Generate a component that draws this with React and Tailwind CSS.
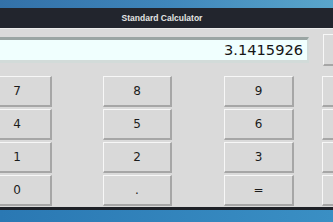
const rows = [
  ["7", "8", "9", ""],
  ["4", "5", "6", ""],
  ["1", "2", "3", ""],
  ["0", ".", "=", ""],
];

function Key({ label, className }) {
  return (
    <button
      className={
        "h-[31px] shrink-0 bg-[#d9d9d9] border-t border-l border-t-[#f7f7f7] border-l-[#f7f7f7] border-b-2 border-r-2 border-b-[#a6a6a6] border-r-[#a6a6a6] text-[12px] text-[#1c1c1c] flex items-center justify-center leading-none " +
        className
      }
      style={{ fontFamily: '"DejaVu Sans", sans-serif' }}
    >
      {label}
    </button>
  );
}

export default function App() {
  return (
    <div className="w-[333px] h-[222px] overflow-hidden flex flex-col bg-[#2f7db5]">
      <div className="h-[8px] shrink-0 bg-gradient-to-r from-[#3371a8] via-[#3f86bb] to-[#5aa6cb]" />

      <div className="h-[20px] shrink-0 bg-[#22252d] flex items-center justify-center pr-[9px]">
        <span
          className="text-[8.5px] font-bold text-[#e4e4e4]"
          style={{ fontFamily: '"Liberation Sans", Arial, sans-serif' }}
        >
          Standard Calculator
        </span>
      </div>

      <div className="h-[179px] shrink-0 bg-[#dadada] border-t border-t-[#ececec] flex flex-col">
        <div className="flex items-start">
          <div
            className="shrink-0 mt-[8px] w-[309px] h-[26px] bg-[#f0fffe] border-t-[3px] border-t-[#9aa5a3] border-b-[3px] border-b-[#d2dbd9] border-r-[2px] border-r-[#d2dbd9] flex items-center justify-end pr-[4px] text-[14.6px] text-[#161616]"
            style={{ fontFamily: '"DejaVu Sans", sans-serif' }}
          >
            3.1415926
          </div>
          <Key label="" className="mt-[5px] ml-[14px] w-[70px] h-[32px]" />
        </div>

        <div className="mt-[10px] flex flex-col gap-[2px]">
          {rows.map((r, i) => (
            <div key={i} className="flex -ml-[17px]">
              <Key label={r[0]} className="w-[69px]" />
              <Key label={r[1]} className="ml-[51px] w-[69px]" />
              <Key label={r[2]} className="ml-[52px] w-[70px]" />
              <Key label={r[3]} className="ml-[28px] w-[70px]" />
            </div>
          ))}
        </div>
      </div>

      <div className="h-[3px] shrink-0 bg-[#1e2127]" />
      <div className="flex-1 bg-gradient-to-r from-[#2a78b3] to-[#3a8fc4]" />
    </div>
  );
}
